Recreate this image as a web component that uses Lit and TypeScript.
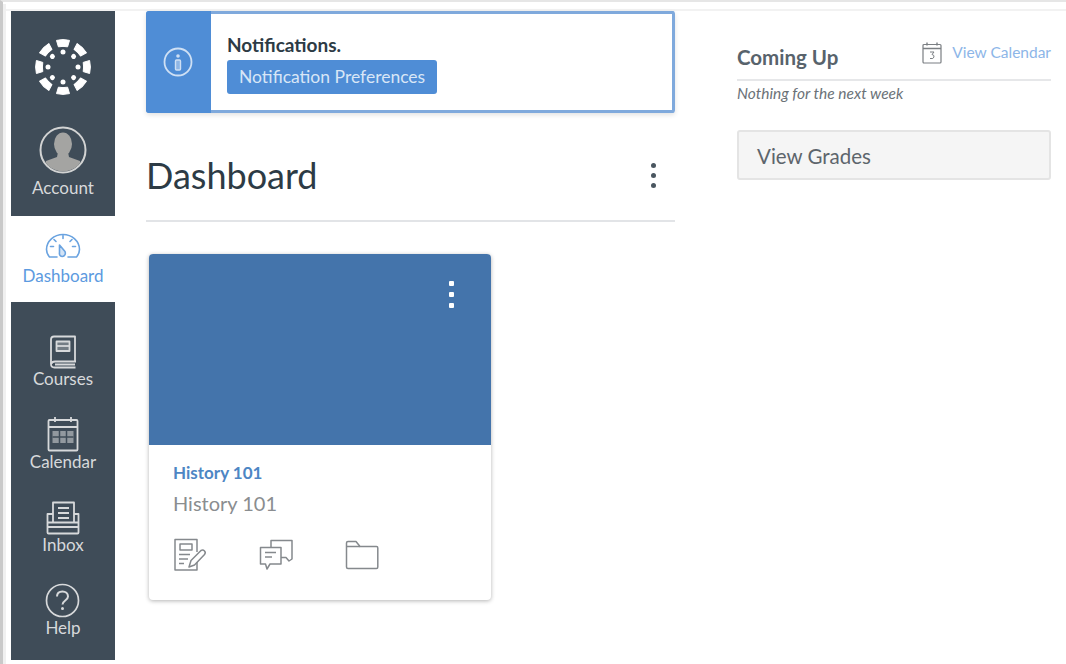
import { LitElement, html, css, svg } from "lit";
import { customElement } from "lit/decorators.js";

const angles = [0, 45, 90, 135, 180, 225, 270, 315];

const logo = html`<svg class="logo" width="58" height="58" viewBox="-29 -29 58 58">
  ${angles.map(
    (a) => svg`<g transform="rotate(${a})" fill="#fff">
      <path d="M-6.5 -26.6Q0 -28.2 6.5 -26.6L4.6 -20.2Q0 -21 -4.6 -20.2Z" stroke="#fff" stroke-width="1" stroke-linejoin="round"/>
      <circle cy="-15" r="2.5"/>
    </g>`
  )}
</svg>`;

const avatar = html`<svg width="48" height="48" viewBox="0 0 48 48">
  <defs><clipPath id="av"><circle cx="24" cy="24" r="21.5"/></clipPath></defs>
  <circle cx="24" cy="24" r="22.5" fill="#3f4c58" stroke="#d2d3d3" stroke-width="2"/>
  <g clip-path="url(#av)" fill="#a4a4a2">
    <ellipse cx="24" cy="18" rx="9" ry="11.5"/>
    <path d="M19 26h10l1 5 11 4 4 13H3l4-13 11-4z"/>
  </g>
</svg>`;

const gauge = html`<svg width="36" height="26" viewBox="0 0 36 26" fill="none" stroke="#6aa3e0" stroke-width="1.6" stroke-linejoin="round" stroke-linecap="round">
  <path d="M12 24H4.5C2.5 21.500 1.500 19 1.500 16.500C1.500 8 9 1.500 18 1.500S34.500 8 34.500 16.500C34.500 19 33.500 21.500 31.500 24H23"/>
  <path d="M5.500 13.500H8.500M9 6.500L11 8.500M18 2.500V5.500M27 6.500L25 8.500M30.500 13.500H27.500"/>
  <path d="M14.500 12L20 18.500C21 21 19.500 23.500 17.500 23.500C15.500 23.500 14 22 14.500 19.500Z" fill="#6aa3e0" fill-opacity=".3"/>
</svg>`;

const book = html`<svg width="28" height="34" viewBox="0 0 28 34" fill="none" stroke="#d7d9db" stroke-width="1.800" stroke-linejoin="round">
  <path d="M26 27V1.500H5Q2 1.500 2 4.500V29Q2 32.500 5.500 32.500H26.500"/>
  <path d="M2.500 29Q2.500 26.500 6 26.500H27M6 29.500H26"/>
  <rect x="7.500" y="6.500" width="13" height="9.500" fill="#d7d9db" fill-opacity=".35"/>
  <path d="M7.500 11H20.500" />
</svg>`;

const calendar = html`<svg width="32" height="36" viewBox="0 0 32 36" fill="none" stroke="#d7d9db" stroke-width="1.800">
  <rect x="1.500" y="4" width="29" height="30.500" rx="1"/>
  <path d="M1.500 11H30.500M8 1V6M24 1V6"/>
  <path d="M5.500 15h21v12h-21z" fill="#d7d9db" fill-opacity=".55" stroke="none"/>
  <path d="M12.500 15V27M19.500 15V27M5.500 21H26.500" stroke="#3f4c58" stroke-width="1.500"/>
</svg>`;

const inbox = html`<svg width="36" height="34" viewBox="0 0 36 34" fill="none" stroke="#d7d9db" stroke-width="1.800" stroke-linejoin="round">
  <path d="M8 21V1.500H29V21"/>
  <path d="M8 13H2.500V31.500Q2.500 32.500 3.500 32.500H32.500Q33.500 32.500 33.500 31.500V13H29"/>
  <path d="M2.500 26H33.500M2.500 21.500H33.500"/>
  <path d="M13 7H24M13 12H24M13 17H24" stroke-width="2"/>
</svg>`;

const help = html`<svg width="35" height="35" viewBox="0 0 35 35" fill="none" stroke="#d7d9db" stroke-width="1.700">
  <circle cx="17.500" cy="17.500" r="16"/>
  <path d="M12 13.500C12 10 14.500 8.500 17.500 8.500S23 10.500 23 13.500C23 17.500 17.500 17.500 17.500 21.500" stroke-width="2"/>
  <circle cx="17.500" cy="25.500" r="1.500" fill="#d7d9db" stroke="none"/>
</svg>`;

const info = html`<svg width="30" height="30" viewBox="0 0 30 30" fill="none" stroke="#cfe0f4" stroke-width="1.800">
  <circle cx="15" cy="15" r="13.500"/>
  <circle cx="15" cy="9" r="1.800" fill="#cfe0f4" stroke="none"/>
  <rect x="12.500" y="13" width="5" height="10" rx="1" fill="#cfe0f4" fill-opacity=".5" stroke-width="1.400"/>
</svg>`;

const smallCal = html`<svg width="20" height="22" viewBox="0 0 20 22" fill="none" stroke="#7b7f83" stroke-width="1.200">
  <rect x="1" y="2.500" width="18" height="18.500" rx="1"/>
  <path d="M1 6.500H19M5 .5V3.500M15 .5V3.500" stroke-width="1.400"/>
  <path d="M8 10H12L10 12.500Q12.300 12.800 12 15Q11.500 17.300 8 16.500" stroke-width="1"/>
</svg>`;

const assignment = html`<svg width="34" height="34" viewBox="0 0 34 34" fill="none" stroke="#85898d" stroke-width="1.500" stroke-linejoin="round">
  <path d="M24 14V1.500H2V32H24V24"/>
  <rect x="7" y="6" width="12" height="6"/>
  <path d="M6 16.500H17M6 21H15M6 25.500H11"/>
  <path d="M16 29L18 22.500L28 12.500Q30 11.500 31.500 13T31.500 16.500L21.500 27Z"/>
</svg>`;

const discussion = html`<svg width="34" height="32" viewBox="0 0 34 32" fill="none" stroke="#85898d" stroke-width="1.500" stroke-linejoin="round">
  <path d="M12 8V1.500H33V20L30 22L27 18.500H22"/>
  <path d="M1.500 8.500H22V25H11L8 30L6.500 25H1.500Z"/>
  <path d="M6 13.500H17M6 18H13"/>
</svg>`;

const folder = html`<svg width="34" height="30" viewBox="0 0 34 30" fill="none" stroke="#85898d" stroke-width="1.500" stroke-linejoin="round">
  <path d="M1.500 27V3Q1.500 1.500 3 1.500H11L15 6.500H31.500Q32.800 6.500 32.800 8V27Q32.800 28.500 31.500 28.500H3Q1.500 28.500 1.500 27Z"/>
  <path d="M1.500 6.500H15"/>
</svg>`;

@customElement("app-root")
export class AppRoot extends LitElement {
  static styles = css`
    :host {
      display: block;
      width: 1066px;
      height: 664px;
      position: relative;
      overflow: hidden;
      background: #fff;
      font-family: Lato, "Open Sans", sans-serif;
      color: #2d3b45;
    }
    .page {
      display: flex;
      height: 664px;
      box-sizing: border-box;
      padding-top: 2px;
      border-top: 2px solid #e6e6e6;
      border-left: 3px solid #c9c9c9;
      margin-top: 0;
    }
    .inner {
      flex: 1;
      display: flex;
      box-sizing: border-box;
      padding: 7px 0 0 8px;
      border-left: 3px solid #f0f0f0;
      margin-left: 0;
      background: linear-gradient(#f2f2f2, #f2f2f2) 0 5px / 100% 2px no-repeat;
    }
    nav {
      width: 104px;
      flex: none;
      display: flex;
      flex-direction: column;
      height: 649px;
      margin-left: -3px;
    }
    .dark {
      background: #3f4c58;
      display: flex;
      flex-direction: column;
      align-items: center;
    }
    .top {
      height: 205px;
      box-sizing: border-box;
      padding-top: 27px;
    }
    .rest {
      height: 358px;
      box-sizing: border-box;
      padding-top: 10px;
      gap: 6px;
    }
    .active {
      height: 86px;
      box-sizing: border-box;
      padding-top: 17px;
      display: flex;
      flex-direction: column;
      align-items: center;
    }
    .logo {
      margin-bottom: 30px;
    }
    .item {
      display: flex;
      flex-direction: column;
      align-items: center;
      height: 77px;
      font-size: 17px;
      line-height: 20px;
      color: #d7d9db;
      justify-content: flex-end;
      padding-bottom: 0;
    }
    .item svg {
      flex: none;
    }
    .account {
      gap: 4px;
    }
    .active .label {
      color: #5c9ae0;
      font-size: 17px;
      line-height: 20px;
      margin-top: 7px;
    }
    main {
      width: 529px;
      flex: none;
      margin-left: 31px;
    }
    .banner {
      display: flex;
      height: 102px;
      box-sizing: border-box;
      border: 3px solid #7fa9dc;
      border-left: none;
      border-radius: 3px;
      box-shadow: 0 2px 5px rgba(0, 0, 0, 0.12);
    }
    .banner-icon {
      width: 65px;
      flex: none;
      margin-top: -3px;
      margin-bottom: -3px;
      background: #4f8dd6;
      border-radius: 3px 0 0 3px;
      display: flex;
      align-items: center;
      justify-content: center;
      padding-right: 1px;
      box-sizing: border-box;
    }
    .banner-body {
      padding: 19px 0 0 16px;
    }
    .banner-title {
      font-size: 19px;
      line-height: 24px;
      font-weight: 700;
      color: #2d3b45;
    }
    .prefs {
      display: inline-block;
      margin-top: 3px;
      background: #4f8dd6;
      color: #d8e6f6;
      font-size: 17.500px;
      line-height: 34px;
      height: 34px;
      padding: 0 12px;
      border-radius: 3px;
    }
    .head {
      display: flex;
      align-items: center;
      justify-content: space-between;
      height: 109px;
      box-sizing: border-box;
      border-bottom: 2px solid #e2e4e7;
      padding-right: 19px;
      padding-top: 17px;
    }
    h1 {
      margin: 0;
      font-size: 36px;
      font-weight: 400;
      line-height: 44px;
      color: #2d3b45;
    }
    .dots {
      display: flex;
      flex-direction: column;
      gap: 5px;
    }
    .dots i {
      display: block;
      width: 5px;
      height: 5px;
      border-radius: 50%;
      background: #4a5660;
    }
    .card {
      width: 342px;
      height: 346px;
      margin: 32px 0 0 3px;
      border-radius: 4px;
      box-shadow: 0 1px 4px rgba(0, 0, 0, 0.3);
      overflow: hidden;
      background: #fff;
    }
    .hero {
      height: 191px;
      background: #4474ab;
      display: flex;
      justify-content: flex-end;
      padding: 27px 37px 0 0;
      box-sizing: border-box;
    }
    .hero .dots {
      gap: 6px;
    }
    .hero .dots i {
      background: #fff;
      border-radius: 1px;
    }
    .card-body {
      padding: 16px 24px 0;
    }
    .course {
      font-size: 17px;
      font-weight: 700;
      line-height: 24px;
      color: #4d86c4;
    }
    .term {
      font-size: 20px;
      line-height: 26px;
      margin-top: 5px;
      color: #8a8d90;
    }
    .actions {
      display: flex;
      align-items: center;
      gap: 52px;
      margin-top: 22px;
    }
    aside {
      width: 314px;
      flex: none;
      margin-left: 62px;
    }
    .up {
      display: flex;
      justify-content: space-between;
      height: 70px;
      box-sizing: border-box;
      border-bottom: 2px solid #e6e7e9;
      padding-top: 32px;
      margin-top: 0;
    }
    .up h2 {
      margin: 0;
      font-size: 20.500px;
      font-weight: 700;
      line-height: 28px;
      color: #58636c;
    }
    .link {
      display: flex;
      gap: 10px;
      font-size: 15.500px;
      line-height: 20px;
      color: #8db6e8;
      margin-top: -1px;
    }
    .none {
      font-size: 15.500px;
      line-height: 24px;
      font-style: italic;
      color: #6b7278;
    }
    .grades {
      height: 50px;
      margin-top: 25px;
      box-sizing: border-box;
      padding-left: 18px;
      font-size: 20.500px;
      line-height: 48px;
      color: #5d656c;
      background: #f5f5f5;
      border: 2px solid #e4e4e4;
      border-radius: 3px;
    }
  `;

  render() {
    return html`
      <div class="page">
        <div class="inner">
          <nav>
            <div class="dark top">
              ${logo}
              <div class="account item" style="height:auto">${avatar}<span>Account</span></div>
            </div>
            <div class="active">${gauge}<span class="label">Dashboard</span></div>
            <div class="dark rest">
              <div class="item">${book}<span>Courses</span></div>
              <div class="item">${calendar}<span>Calendar</span></div>
              <div class="item">${inbox}<span>Inbox</span></div>
              <div class="item">${help}<span>Help</span></div>
            </div>
          </nav>
          <main>
            <div class="banner">
              <div class="banner-icon">${info}</div>
              <div class="banner-body">
                <div class="banner-title">Notifications.</div>
                <span class="prefs">Notification Preferences</span>
              </div>
            </div>
            <div class="head">
              <h1>Dashboard</h1>
              <div class="dots"><i></i><i></i><i></i></div>
            </div>
            <div class="card">
              <div class="hero"><div class="dots"><i></i><i></i><i></i></div></div>
              <div class="card-body">
                <div class="course">History 101</div>
                <div class="term">History 101</div>
                <div class="actions">${assignment}${discussion}${folder}</div>
              </div>
            </div>
          </main>
          <aside>
            <div class="up">
              <h2>Coming Up</h2>
              <div class="link">${smallCal}<span>View Calendar</span></div>
            </div>
            <div class="none">Nothing for the next week</div>
            <div class="grades">View Grades</div>
          </aside>
        </div>
      </div>
    `;
  }
}
